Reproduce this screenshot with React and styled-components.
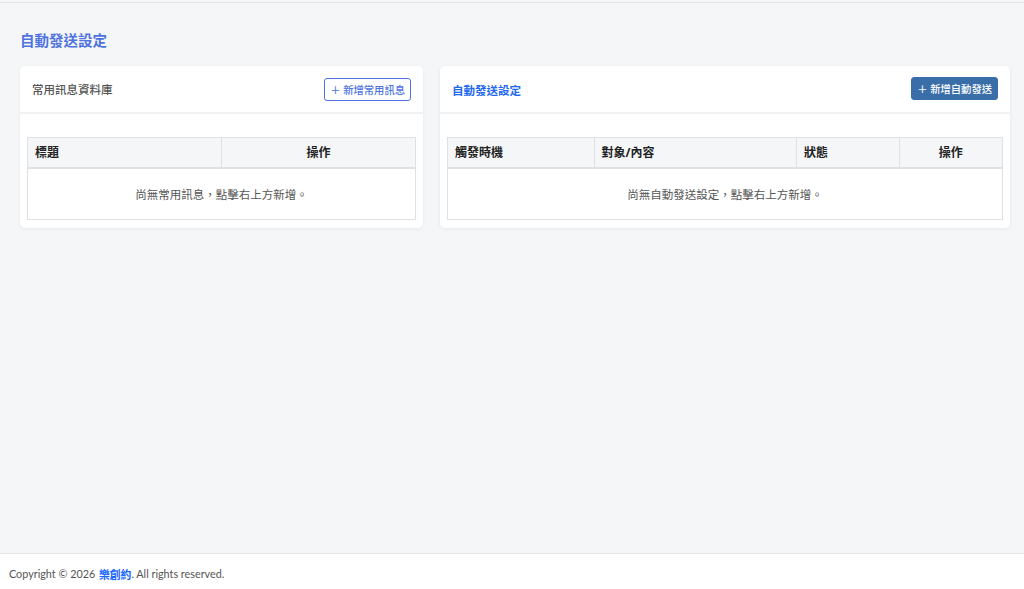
import React from "react";
import styled, { createGlobalStyle } from "styled-components";

const GlobalStyle = createGlobalStyle`
  html, body {
    margin: 0;
    padding: 0;
    background: #f5f6f8;
    font-family: "Noto Sans", "Noto Sans CJK TC", sans-serif;
  }
  * { box-sizing: border-box; }
`;

const commonCols = [
  { label: "標題", width: "50%" },
  { label: "操作", width: "50%", center: true },
];

const autoCols = [
  { label: "觸發時機", width: "26.4%" },
  { label: "對象/內容", width: "36.5%" },
  { label: "狀態", width: "18.5%" },
  { label: "操作", width: "18.6%", center: true },
];

const App = () => {
  return (
    <Page>
      <GlobalStyle />
      <TopLine />
      <Main>
        <PageTitle>自動發送設定</PageTitle>
        <Grid>
          <Card>
            <CardHeader>
              <CardTitle>常用訊息資料庫</CardTitle>
              <Button>＋ 新增常用訊息</Button>
            </CardHeader>
            <CardBody>
              <DataTable cols={commonCols} empty="尚無常用訊息，點擊右上方新增。" />
            </CardBody>
          </Card>
          <Card>
            <CardHeader>
              <CardTitle primary>自動發送設定</CardTitle>
              <Button filled>＋ 新增自動發送</Button>
            </CardHeader>
            <CardBody>
              <DataTable cols={autoCols} empty="尚無自動發送設定，點擊右上方新增。" />
            </CardBody>
          </Card>
        </Grid>
      </Main>
      <Footer>
        Copyright © 2026 <Brand>樂創約</Brand>. All rights reserved.
      </Footer>
    </Page>
  );
};

const DataTable = ({ cols, empty }) => (
  <Table>
    <colgroup>
      {cols.map((c) => (
        <col key={c.label} style={{ width: c.width }} />
      ))}
    </colgroup>
    <thead>
      <tr>
        {cols.map((c) => (
          <Th key={c.label} center={c.center}>
            {c.label}
          </Th>
        ))}
      </tr>
    </thead>
    <tbody>
      <tr>
        <Empty colSpan={cols.length}>{empty}</Empty>
      </tr>
    </tbody>
  </Table>
);

export default App;

const Page = styled.div`
  width: 100%;
  height: 100vh;
  display: flex;
  flex-direction: column;
`;

const TopLine = styled.div`
  height: 3px;
  border-bottom: 1px solid #e1e3e7;
  background: #f5f6f8;
`;

const Main = styled.main`
  flex: 1;
  padding: 26px 14px 0 20px;
`;

const PageTitle = styled.h1`
  margin: 0 0 15px;
  font-size: 14.5px;
  line-height: 22px;
  font-weight: 600;
  color: #4e73df;
`;

const Grid = styled.div`
  display: grid;
  grid-template-columns: 403px 570px;
  gap: 17px;
  align-items: start;
`;

const Card = styled.div`
  background: #fff;
  border-radius: 5px;
  box-shadow: 0 1px 4px rgba(0, 0, 0, 0.06);
`;

const CardHeader = styled.div`
  height: 48px;
  padding: 0 12px;
  display: flex;
  align-items: center;
  justify-content: space-between;
  border-bottom: 2px solid #f1f2f4;
`;

const CardTitle = styled.div`
  font-size: 11.5px;
  font-weight: ${(p) => (p.primary ? 600 : 500)};
  color: ${(p) => (p.primary ? "#2168f0" : "#555")};
  margin-top: ${(p) => (p.primary ? "2px" : "0")};
`;

const Button = styled.button`
  height: 23px;
  padding: 0 5px;
  font-family: inherit;
  font-size: 10.3px;
  font-weight: 500;
  border-radius: 3px;
  border: 1px solid ${(p) => (p.filled ? "#3a6ea8" : "#4e73df")};
  background: ${(p) => (p.filled ? "#3a6ea8" : "#fff")};
  color: ${(p) => (p.filled ? "#fff" : "#4e73df")};
  margin-top: ${(p) => (p.filled ? "-2px" : "0")};
`;

const CardBody = styled.div`
  padding: 23px 7px 8px;
`;

const Table = styled.table`
  width: 100%;
  border-collapse: collapse;
  table-layout: fixed;
  border: 1px solid #dee0e3;
`;

const Th = styled.th`
  height: 30px;
  padding: 0 7px;
  background: #f5f6f8;
  border: 1px solid #dee0e3;
  border-bottom-width: 2px;
  font-size: 12px;
  font-weight: 700;
  color: #222;
  text-align: ${(p) => (p.center ? "center" : "left")};
`;

const Empty = styled.td`
  height: 52px;
  text-align: center;
  font-size: 11.5px;
  color: #555;
`;

const Footer = styled.footer`
  height: 36px;
  background: #fff;
  border-top: 1px solid #e3e5e8;
  display: flex;
  align-items: center;
  padding: 4px 9px 0;
  font-family: Lato, "Noto Sans CJK TC", sans-serif;
  font-size: 10.8px;
  color: #555;
  white-space: pre;
`;

const Brand = styled.span`
  color: #1a66ff;
  font-weight: 600;
  margin-left: 1px;
`;
